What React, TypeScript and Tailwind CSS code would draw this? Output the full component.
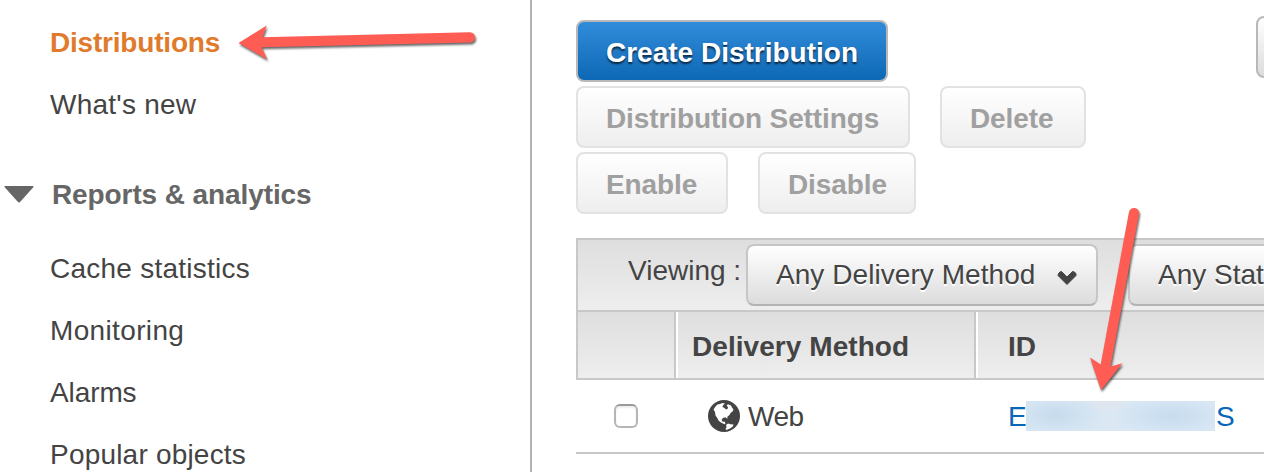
import React from "react";

const BTN = "flex h-[62px] items-center rounded-[8px] border-2 px-7 pt-1 text-[28px] leading-8 whitespace-nowrap";
const DISABLED = BTN + " border-[#e2e2e2] bg-linear-to-b from-white to-[#eeeeee] font-bold text-[#a0a0a0] shrink-0 tracking-[-0.1px]";
const SELECT = "flex h-[62px] shrink-0 items-center rounded-[8px] border-2 border-[#c6c6c6] border-b-[#b3b3b3] bg-linear-to-b from-white to-[#dcdcdc] text-[28px] leading-8 whitespace-nowrap [text-shadow:0_2px_0_#fff]";

function NavItem({ children, className = "" }: { children: React.ReactNode; className?: string }) {
  return <li className={"flex h-[62px] items-center whitespace-nowrap " + className}>{children}</li>;
}

function Globe() {
  return (
    <svg className="h-8 w-8 shrink-0" viewBox="0 0 32 32">
      <circle cx="16" cy="16" r="16" fill="#444" />
      <path
        fill="#fff"
        d="M5.500 9.500L7.500 6.500L9.500 4.500L12 4L14.500 3L17 3.600L15 5.300L14.500 7L16.500 8L18 9.500L19.500 9L20 7L18.500 5.500L20 4.200L23 5.500L24 7.500L25.500 9.500L24.500 11.500L22.500 13L21.500 15L19.500 16.500L19.300 18.800L17.500 17.300L15 18L13.600 19.800L14.500 21.800L16.500 21.500L17.500 23.500L16.500 24.300L12.500 22.200L10.500 20.500L9 17.500L7.500 15.500L7 12Z"
      />
      <path fill="#fff" d="M18 25L20 23.600L22.500 24.200L25.500 24.600L24.800 26.500L22 28.500L18.500 30L17.500 29L18.600 27Z" />
    </svg>
  );
}

export default function App() {
  return (
    <div className="relative flex h-[472px] w-[1264px] overflow-hidden bg-white font-['Liberation_Sans',Arial,sans-serif] text-[28px] leading-8 text-[#444]">
      <nav className="h-full w-[532px] shrink-0 border-r-2 border-[#b3b3b3]">
        <ul className="flex flex-col pt-3 pl-[50px]">
          <NavItem className="font-bold tracking-[-0.2px] text-[#e07b2e]">Distributions</NavItem>
          <NavItem className="tracking-[0.25px]">What's new</NavItem>
        </ul>
        <div className="mt-7 flex h-[62px] items-center pl-1 font-bold text-[#666]">
          <svg className="mr-[18px] h-[18px] w-[30px]" viewBox="0 0 30 18">
            <path d="M1 0H29Q30 0 29.300 1.200L16.500 15.500Q15 17.500 13.500 15.500L.7 1.200Q0 0 1 0Z" fill="#666" />
          </svg>
          <span className="tracking-[-0.1px]">Reports &amp; analytics</span>
        </div>
        <ul className="mt-3 flex flex-col pl-[50px]">
          <NavItem className="tracking-[0.25px]">Cache statistics</NavItem>
          <NavItem className="tracking-[0.35px]">Monitoring</NavItem>
          <NavItem className="tracking-[-0.1px]">Alarms</NavItem>
          <NavItem className="tracking-[0.2px]">Popular objects</NavItem>
        </ul>
      </nav>
      <main className="min-w-0 flex-1 overflow-hidden pl-11">
        <div className="flex h-[238px] flex-col gap-1 pt-5">
          <div className="flex">
            <button className={BTN + " w-[312px] shrink-0 border-[#b8b8b8] bg-linear-to-b from-[#308cdb] to-[#0b68b4] font-bold text-white [text-shadow:0_2px_2px_#000a]"}>Create Distribution</button>
            <div className="-mt-1 ml-[368px] h-[62px] w-20 shrink-0 rounded-[8px] border-2 border-[#b8b8b8] bg-linear-to-b from-white to-[#dcdcdc]" />
          </div>
          <div className="flex gap-[30px]">
            <button className={DISABLED + " w-[334px]"}>Distribution Settings</button>
            <button className={DISABLED + " w-[146px]"}>Delete</button>
          </div>
          <div className="flex gap-[30px]">
            <button className={DISABLED + " w-[152px]"}>Enable</button>
            <button className={DISABLED + " w-[158px]"}>Disable</button>
          </div>
        </div>
        <div className="flex h-[72px] border-t-2 border-l-2 border-[#c8c8c8] bg-linear-to-b from-[#dedede] to-[#eeeeee] pt-1 pl-[50px]">
          <span className="mt-[11px] w-[118px] shrink-0 whitespace-nowrap">Viewing :</span>
          <div className={SELECT + " w-[352px] pl-7"}>
            <span className="w-[280px] tracking-[0.06px]">Any Delivery Method</span>
            <svg className="mt-[6px] h-4 w-[22px]" viewBox="0 0 22 16">
              <path d="M2.500 3.500L4.500 1.500H5.500L11 7L16.500 1.500H17.500L20 3.500V5.500L11 14.500L2 5.500Z" fill="#444" stroke="#444" strokeWidth="1" strokeLinejoin="round" />
            </svg>
          </div>
          <div className={SELECT + " ml-[30px] w-[300px] pl-7"}>Any State</div>
        </div>
        <div className="flex h-[70px] border-y-2 border-l-2 border-[#c8c8c8] bg-linear-to-b from-[#dedede] to-[#eeeeee] font-bold">
          <div className="w-[98px] shrink-0 border-r-2 border-[#c8c8c8]" />
          <div className="flex w-[300px] shrink-0 items-center border-r-2 border-l-2 border-r-[#c8c8c8] border-l-white pt-1 pl-[14px] tracking-[0.06px]">Delivery Method</div>
          <div className="flex flex-1 items-center border-l-2 border-white pt-1 pl-[30px]">ID</div>
        </div>
        <div className="flex h-[74px] items-center border-b-2 border-[#c8c8c8]">
          <div className="ml-[38px] h-6 w-6 shrink-0 rounded-[6px] border-2 border-[#b5b5b5] border-t-[#999] bg-white shadow-[inset_0_2px_2px_#0001]" />
          <div className="ml-[70px] flex w-[300px] shrink-0 items-center gap-2">
            <Globe />
            <span className="pt-0.5 tracking-[-0.5px]">Web</span>
          </div>
          <div className="flex items-center text-[#0967b9]">
            <span className="w-[18px] pt-0.5">E</span>
            <span className="mr-px h-[30px] w-[189px] bg-[#dbe8f4] bg-[radial-gradient(ellipse_50px_22px_at_30px_14px,#c6dbed,transparent),radial-gradient(ellipse_60px_22px_at_146px_15px,#c7dcef,transparent),radial-gradient(ellipse_24px_12px_at_80px_1px,#e1e5ee,transparent)]" />
            <span className="pt-0.5">S</span>
          </div>
        </div>
      </main>
      <svg className="pointer-events-none absolute inset-0 h-[472px] w-[1264px] drop-shadow-[1px_2px_1px_#0009]" viewBox="0 0 1264 472">
        <g fill="#ff5c54">
          <path d="M238.500 43L266.700 25.500L262.500 37.300L470 32.300A5 5 0 0 1 470 42.600L261.500 47.300L267.300 59.500Z" />
          <path d="M1101 390L1090 357.500L1100.700 364.500L1129 212A5 5 0 0 1 1139 214L1110.500 366.500L1122.500 363.300Z" />
        </g>
      </svg>
    </div>
  );
}
